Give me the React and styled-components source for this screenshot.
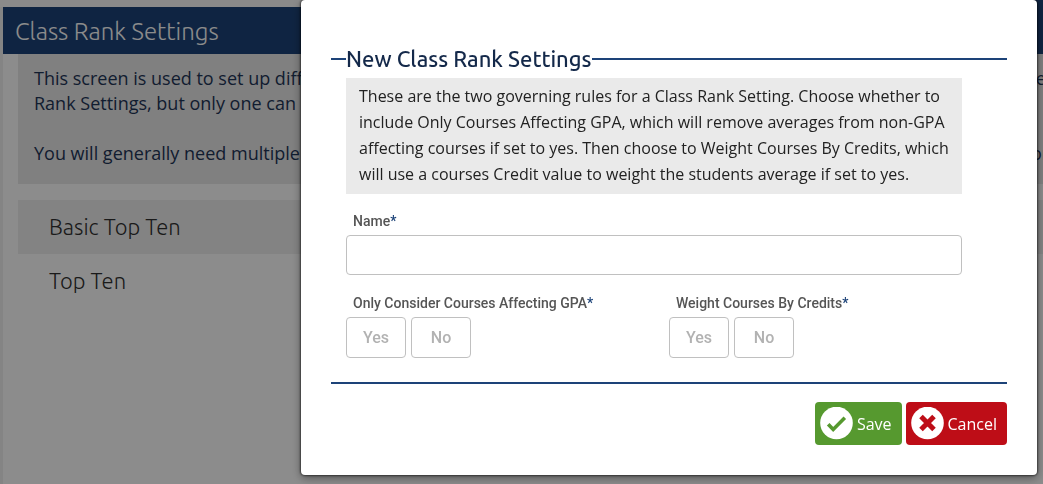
import React, { useState } from 'react';
import styled, { createGlobalStyle } from 'styled-components';

const GlobalStyle = createGlobalStyle`
    * {
        box-sizing: border-box;
    }
    body {
        margin: 0;
        overflow: hidden;
        background: #ffffff;
        font-family: 'Open Sans', sans-serif;
    }
`
const Page = styled.div`
    min-height: 100vh;
    display: flex;
    flex-direction: column;
`
const Topbar = styled.div`
    display: flex;
    justify-content: flex-end;
    height: 7px;
    background: #fcfcfc;
`
const Toptab = styled.div`
    width: 20px;
    background: #1d4378;
`
const Content = styled.main`
    flex: 1;
    border-left: 3px solid #f0f0f0;
`
const Titlebar = styled.h1`
    margin: 0;
    padding: 0 12px;
    height: 47px;
    line-height: 50px;
    background: #1d4378;
    color: #ffffff;
    font-family: Ubuntu, 'Noto Sans', sans-serif;
    font-size: 24px;
    font-weight: 300;
`
const Intro = styled.div`
    margin-left: 15px;
    padding: 12px 0 18px 16px;
    background: #e9e9e9;
    color: #1f3658;
    font-size: 18px;
    line-height: 25px;
    white-space: nowrap;
    overflow: hidden;
`
const Paragraph = styled.p`
    margin: 0 0 25px;

    &:last-child {
        margin: 0;
    }
`
const Settingslist = styled.ul`
    list-style: none;
    margin: 16px 0 0 15px;
    padding: 0;
`
const Settingsitem = styled.li`
    padding: 0 31px;
    line-height: 54px;
    background: ${props => props.$shaded ? '#efefef' : 'transparent'};
    color: #313131;
    font-family: Ubuntu, 'Noto Sans', sans-serif;
    font-size: 22px;
    font-weight: 300;
`
const Backdrop = styled.div`
    position: fixed;
    inset: 0;
    display: flex;
    align-items: flex-start;
    padding: 0 6px 0 301px;
    background: rgba(0, 0, 0, 0.45);
`
const Modal = styled.form`
    flex: 1;
    padding: 46px 30px 30px;
    background: #ffffff;
    border-radius: 4px;
    box-shadow: 0 0 2px 1px rgba(0, 0, 0, 0.5), 0 3px 10px rgba(0, 0, 0, 0.4);
`
const Section = styled.fieldset`
    margin: 0;
    padding: 6px 45px 24px 15px;
    border: solid #1d4378;
    border-width: 2px 0;
`
const Legend = styled.legend`
    padding: 0;
    color: #14294a;
    font-family: Ubuntu, 'Noto Sans', sans-serif;
    font-size: 22px;
    font-weight: 500;
    line-height: 26px;
`
const Rules = styled.p`
    margin: 0 0 18px;
    padding: 5px 12px 7px 13px;
    background: #eaeaea;
    color: #222222;
    font-size: 16px;
    line-height: 26px;
`
const Label = styled.label`
    display: block;
    padding-left: 7px;
    margin-bottom: 5px;
    color: #555555;
    font-family: Roboto, sans-serif;
    font-size: 14px;
    font-weight: 500;
    line-height: 18px;
`
const Required = styled.span`
    color: #1d4378;
`
const Nameinput = styled.input`
    display: block;
    width: 100%;
    height: 40px;
    margin-bottom: 19px;
    padding: 0 12px;
    border: 1px solid #c0c0c0;
    border-radius: 4px;
    font-family: Roboto, sans-serif;
    font-size: 16px;
`
const Columns = styled.div`
    display: grid;
    grid-template-columns: 1fr 1fr;
    column-gap: 30px;
`
const Togglegroup = styled.div`
    display: flex;
    gap: 5px;
`
const Togglebtn = styled.button`
    width: 60px;
    height: 41px;
    padding: 0;
    border: 1px solid #c0c0c0;
    border-radius: 4px;
    background: ${props => props.$active ? '#e9e9e9' : '#ffffff'};
    color: ${props => props.$active ? '#555555' : '#b2b2b2'};
    font-family: Roboto, sans-serif;
    font-size: 16px;
    font-weight: 500;
    cursor: pointer;
`
const Actions = styled.div`
    display: flex;
    justify-content: flex-end;
    gap: 4px;
    margin-top: 18px;
`
const Actionbtn = styled.button`
    display: flex;
    align-items: center;
    gap: 4px;
    height: 43px;
    padding: 0 10px 0 5px;
    border: none;
    border-radius: 4px;
    background: ${props => props.$color};
    color: #ffffff;
    font-family: 'Open Sans', sans-serif;
    font-size: 16px;
    cursor: pointer;
`

const SaveIcon = () => (
    <svg width="33" height="33" viewBox="0 0 33 33" aria-hidden="true">
        <circle cx="16.5" cy="16" r="16.3" fill="#ffffff" />
        <path d="M8.2 17.2L13.2 22.4L24.8 10.8" fill="none" stroke="#56992f" strokeWidth="3.6" />
    </svg>
)

const CancelIcon = () => (
    <svg width="33" height="33" viewBox="0 0 33 33" aria-hidden="true">
        <circle cx="16.5" cy="16" r="16.3" fill="#ffffff" />
        <path d="M10 9.5L23 22.5M23 9.5L10 22.5" fill="none" stroke="#be0d17" strokeWidth="5" />
    </svg>
)

//yes/no choice, nothing is selected at first
const YesNo = ({ id, title }) => {
    const [choice, setChoice] = useState('');

    return (
        <div>
            <Label as="div" id={id}>{title}<Required>*</Required></Label>
            <Togglegroup role="group" aria-labelledby={id}>
                {['Yes', 'No'].map(option => (
                    <Togglebtn
                        key={option}
                        type="button"
                        aria-pressed={choice === option}
                        $active={choice === option}
                        onClick={() => setChoice(option)}
                    >
                        {option}
                    </Togglebtn>
                ))}
            </Togglegroup>
        </div>
    )
}

const App = () => {
    const [name, setName] = useState('');
    const [open, setOpen] = useState(true);
    const settings = ['Basic Top Ten', 'Top Ten'];

    const handleSubmit = (event) => {
        event.preventDefault();
        setOpen(false);
    }

    return (
        <>
            <GlobalStyle />
            <Page>
                <Topbar><Toptab /></Topbar>
                <Content>
                    <Titlebar>Class Rank Settings</Titlebar>
                    <Intro>
                        <Paragraph>
                            This screen is used to set up different Class Rank Settings. There can be many Class Rank settings for each group in some<br />
                            Rank Settings, but only one can be active at a time.
                        </Paragraph>
                        <Paragraph>
                            You will generally need multiple Class Rank Settings because each of the report cards can have rules of its own and the order
                        </Paragraph>
                    </Intro>
                    <Settingslist>
                        {settings.map((setting, i) => (
                            <Settingsitem key={setting} $shaded={i % 2 === 0}>{setting}</Settingsitem>
                        ))}
                    </Settingslist>
                </Content>
            </Page>
            { open ?
            <Backdrop>
                <Modal role="dialog" aria-labelledby="modal-title" onSubmit={handleSubmit}>
                    <Section>
                        <Legend id="modal-title">New Class Rank Settings</Legend>
                        <Rules>
                            These are the two governing rules for a Class Rank Setting. Choose whether to include Only Courses Affecting GPA, which will remove averages from non-GPA affecting courses if set to yes. Then choose to Weight Courses By Credits, which will use a courses Credit value to weight the students average if set to yes.
                        </Rules>
                        <Label htmlFor="name">Name<Required>*</Required></Label>
                        <Nameinput id="name" type="text" value={name} onChange={e => setName(e.target.value)} />
                        <Columns>
                            <YesNo id="affecting-gpa" title="Only Consider Courses Affecting GPA" />
                            <YesNo id="weight-credits" title="Weight Courses By Credits" />
                        </Columns>
                    </Section>
                    <Actions>
                        <Actionbtn type="submit" $color="#56992f"><SaveIcon />Save</Actionbtn>
                        <Actionbtn type="button" $color="#be0d17" onClick={() => setOpen(false)}><CancelIcon />Cancel</Actionbtn>
                    </Actions>
                </Modal>
            </Backdrop>
            : null }
        </>
    );
}

export default App;
